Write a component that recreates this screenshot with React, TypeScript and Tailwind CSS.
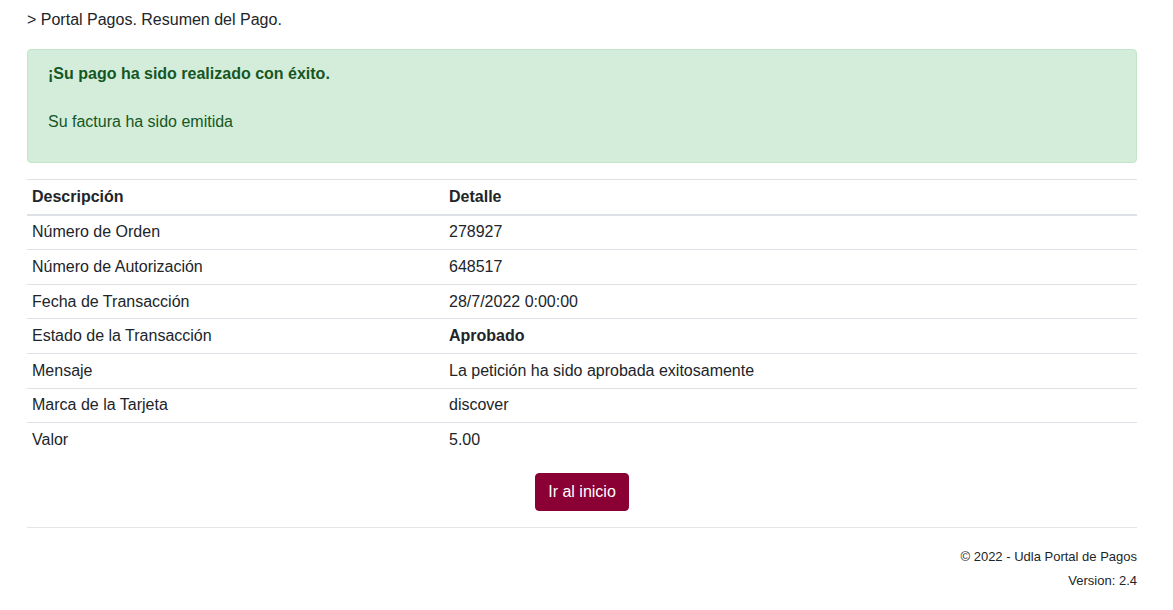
import React from 'react';

const rows: { label: string; value: string; bold?: boolean }[] = [
  { label: 'Número de Orden', value: '278927' },
  { label: 'Número de Autorización', value: '648517' },
  { label: 'Fecha de Transacción', value: '28/7/2022 0:00:00' },
  { label: 'Estado de la Transacción', value: 'Aprobado', bold: true },
  { label: 'Mensaje', value: 'La petición ha sido aprobada exitosamente' },
  { label: 'Marca de la Tarjeta', value: 'discover' },
  { label: 'Valor', value: '5.00' },
];

const App = () => {
  return (
    <div className="min-h-[610px] bg-white text-[#212529] text-base leading-6 font-['Liberation_Sans',Arial,sans-serif]">
      <div className="ml-[27px] w-[1110px] pt-2">
        <div className="mb-[17px]">&gt; Portal Pagos. Resumen del Pago.</div>

        <div className="mb-4 rounded border border-[#c3e6cb] bg-[#d4edda] px-5 pt-3 pb-3 text-[#155724]">
          <div className="mb-[24px] font-bold">¡Su pago ha sido realizado con éxito.</div>
          <p className="mb-4">Su factura ha sido emitida</p>
        </div>

        <table className="w-full border-collapse">
          <thead>
            <tr>
              <th className="w-[417px] border-t border-b-2 border-[#dee2e6] px-[5px] py-[4.8px] text-left font-bold">Descripción</th>
              <th className="border-t border-b-2 border-[#dee2e6] px-[5px] py-[4.8px] text-left font-bold">Detalle</th>
            </tr>
          </thead>
          <tbody>
            {rows.map(r => (
              <tr key={r.label}>
                <td className="border-t border-[#dee2e6] px-[5px] py-[4.8px]">{r.label}</td>
                <td className={`border-t border-[#dee2e6] px-[5px] py-[4.8px] ${r.bold ? 'font-bold' : ''}`}>{r.value}</td>
              </tr>
            ))}
          </tbody>
        </table>

        <div className="mt-4 flex justify-center">
          <button className="h-[38px] rounded border border-[#8a0035] bg-[#8a0035] px-3 text-white">Ir al inicio</button>
        </div>

        <hr className="mt-4 border-t border-[#e5e5e5]" />

        <div className="pt-[17px] text-right text-[13px] leading-6">
          <div>© 2022 - Udla Portal de Pagos</div>
          <div>Version: 2.4</div>
        </div>
      </div>
    </div>
  );
};

export default App;
